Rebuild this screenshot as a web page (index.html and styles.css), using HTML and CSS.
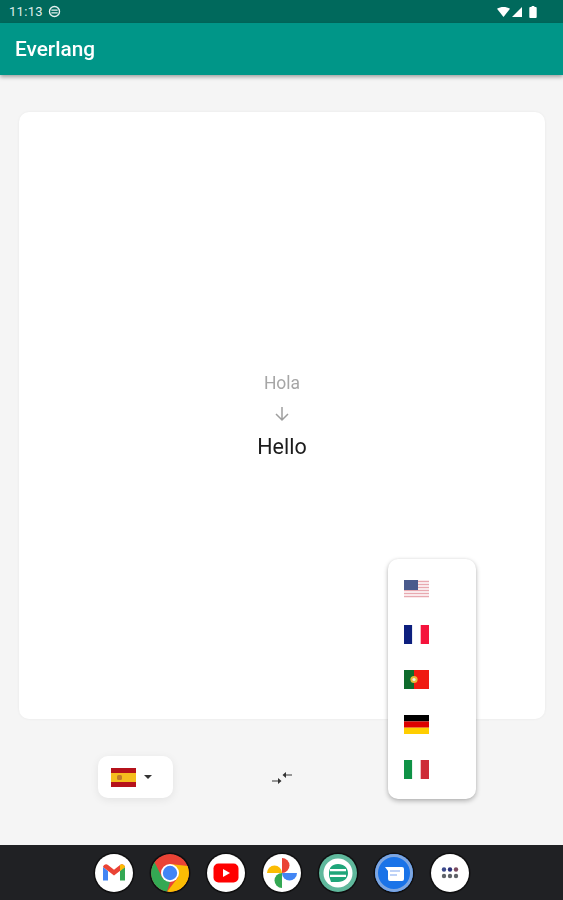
FILE: index.html
```html
<!DOCTYPE html>
<html lang="en">
<head>
<meta charset="utf-8">
<title>Everlang</title>
<link rel="stylesheet" href="styles.css">
</head>
<body>
<div class="screen">
  <header class="status">
    <div class="status-left">
      <span class="time">11:13</span>
      <svg class="dnd" viewBox="0 0 14 14"><circle cx="7" cy="7" r="5.4" fill="none" stroke="#e6f1ef" stroke-width="1.5"/><path d="M3.6 5.6h6.8M3.6 8.4h6.8" stroke="#e6f1ef" stroke-width="1.3"/></svg>
    </div>
    <div class="status-right">
      <svg class="s-wifi" viewBox="0 0 13 10"><path d="M0 1.800C3.800-.6 9.200-.6 13 1.800L6.500 10z" fill="#fff"/></svg>
      <svg class="s-signal" viewBox="0 0 10 10"><path d="M10 0v10H0z" fill="#fff"/></svg>
      <svg class="s-batt" viewBox="0 0 8 13"><path d="M2.500 0h3v1.200H7a1 1 0 0 1 1 1V12a1 1 0 0 1-1 1H1a1 1 0 0 1-1-1V2.200a1 1 0 0 1 1-1h1.500z" fill="#fff"/></svg>
    </div>
  </header>
  <div class="appbar"><h1 class="title">Everlang</h1></div>

  <main class="content">
    <section class="card">
      <div class="source">Hola</div>
      <svg class="arrow" viewBox="0 0 16 16"><path d="M8 1v13M2 8l6 6 6-6" fill="none" stroke="#9e9e9e" stroke-width="1.500"/></svg>
      <div class="target">Hello</div>
    </section>

    <div class="controls">
      <button class="lang-btn" type="button">
        <svg class="flag" viewBox="0 0 25 19"><rect width="25" height="19" fill="#b5121b"/><rect y="5" width="25" height="9" fill="#f5bd1e"/><rect x="6" y="7" width="5" height="5" rx="1.500" fill="#c07a2a"/></svg>
        <svg class="caret" viewBox="0 0 8 4"><path d="M0 0h8L4 4z" fill="#333"/></svg>
      </button>
      <svg class="swap" viewBox="0 0 20 14"><path d="M0 10h6.500M20 4h-6.500" stroke-width="1.400" stroke="#777" fill="none"/><path d="M6 7l3.500 3L6 13zM14 1l-3.500 3L14 7z" fill="#333"/></svg>
    </div>

    <ul class="menu">
      <li class="menu-item">
        <svg class="flag" viewBox="0 0 25 19"><rect width="25" height="19" fill="#fff"/><path d="M0 1.500h25M0 4.500h25M0 7.500h25M0 10.500h25M0 13.500h25M0 16.500h25" stroke="#e8a9b0" stroke-width="1.500"/><rect width="14" height="10" fill="#4a5a8c"/></svg>
      </li>
      <li class="menu-item">
        <svg class="flag" viewBox="0 0 25 19"><rect width="8.300" height="19" fill="#0d1f7e"/><rect x="8.300" width="8.400" height="19" fill="#fff"/><rect x="16.700" width="8.300" height="19" fill="#f5133c"/></svg>
      </li>
      <li class="menu-item">
        <svg class="flag" viewBox="0 0 25 19"><rect width="25" height="19" fill="#f01a10"/><rect width="10" height="19" fill="#0e6b2c"/><circle cx="10" cy="9.500" r="3.600" fill="#e8b93a"/><circle cx="10" cy="9.500" r="1.600" fill="#f4efe6"/></svg>
      </li>
      <li class="menu-item">
        <svg class="flag" viewBox="0 0 25 19"><rect width="25" height="6.400" fill="#000"/><rect y="6.400" width="25" height="6.300" fill="#dd0000"/><rect y="12.700" width="25" height="6.300" fill="#ffce00"/></svg>
      </li>
      <li class="menu-item">
        <svg class="flag" viewBox="0 0 25 19"><rect width="8.300" height="19" fill="#0f9246"/><rect x="8.300" width="8.400" height="19" fill="#fff"/><rect x="16.700" width="8.300" height="19" fill="#ce2b37"/></svg>
      </li>
    </ul>
  </main>

  <nav class="dock">
    <span class="app app-white">
      <svg viewBox="0 0 38 38"><path d="M8 13v13.500h5V17z" fill="#4285f4"/><path d="M25 17v9.500h5V13z" fill="#34a853"/><path d="M8 13c.8-3 3.500-3.200 5-2l6 4.700 6-4.700c1.500-1.200 4.200-1 5 2L19 21.500z" fill="#ea4335"/><path d="M25 11c1.500-1.200 4.200-1 5 2l-5 4z" fill="#fbbc04"/></svg>
    </span>
    <span class="app">
      <svg viewBox="0 0 38 38"><circle cx="19" cy="19" r="19" fill="#ea4335"/><path d="M3.400 8 11.200 23.500 19 28 16 37.800A19 19 0 0 1 3.400 8z" fill="#34a853"/><path d="M16 37.800 27 23.500 19 10 36.800 12A19 19 0 0 1 16 37.800z" fill="#fbbc04"/><circle cx="19" cy="19" r="9" fill="#fff"/><circle cx="19" cy="19" r="7.200" fill="#4285f4"/></svg>
    </span>
    <span class="app app-white">
      <svg viewBox="0 0 38 38"><rect x="6.500" y="9.500" width="25" height="19" rx="5" fill="#f00"/><path d="M16 15l7 4-7 4z" fill="#fff"/></svg>
    </span>
    <span class="app app-white">
      <svg viewBox="0 0 38 38"><path d="M19 19A7.500 7.500 0 0 0 4 19z" fill="#fbbc04"/><path d="M19 19A7.500 7.500 0 0 0 19 4z" fill="#ea4335"/><path d="M19 19A7.500 7.500 0 0 0 34 19z" fill="#4285f4"/><path d="M19 19A7.500 7.500 0 0 0 19 34z" fill="#34a853"/></svg>
    </span>
    <span class="app app-green">
      <svg viewBox="0 0 38 38"><circle cx="19" cy="19" r="14.500" fill="#fff"/><path d="M19 10c6 0 10 3.800 10 9s-4 9-10 9h-7l-1-3c-1-1.800-1-4.200-1-6 0-5.200 3-9 9-9z" fill="#1fa67a"/><path d="M11 16.200h16M11 21.800h16" stroke="#fff" stroke-width="2.200"/></svg>
    </span>
    <span class="app app-blue">
      <svg viewBox="0 0 38 38"><path d="M10 13h17a2 2 0 0 1 2 2v10a2 2 0 0 1-2 2H15a2 2 0 0 1-2-2v-8z" fill="#fff"/><path d="M15 17h10M15 21h7" stroke="#a9c4f5" stroke-width="1.600"/></svg>
    </span>
    <span class="app app-white">
      <svg viewBox="0 0 38 38"><circle cx="13" cy="15.500" r="2.200" fill="#3c4a8c"/><circle cx="19" cy="15.500" r="2.200" fill="#2a2f7a"/><circle cx="25" cy="15.500" r="2.200" fill="#7a4a60"/><circle cx="13" cy="22" r="2.200" fill="#5f6368"/><circle cx="19" cy="22" r="2.200" fill="#5f6368"/><circle cx="25" cy="22" r="2.200" fill="#5f6368"/></svg>
    </span>
  </nav>
</div>
</body>
</html>
```
FILE: styles.css
```css
* { box-sizing: border-box; }
html, body { margin: 0; padding: 0; }
body { font-family: Roboto, "Liberation Sans", sans-serif; background: #f5f5f5; }
.screen {
  width: 563px;
  height: 900px;
  display: flex;
  flex-direction: column;
  overflow: hidden;
  filter: blur(0.6px);
}
.status {
  height: 23px;
  background: #00695c;
  display: flex;
  align-items: center;
  justify-content: space-between;
  padding: 0 26px 0 9px;
  flex: none;
}
.status-left { display: flex; align-items: center; gap: 5px; }
.time { font-size: 13px; color: #dfeeeb; letter-spacing: 0.3px; line-height: 1; }
.dnd { width: 13px; height: 13px; }
.status-right { display: flex; align-items: center; gap: 2px; }
.s-wifi { width: 13px; height: 10px; }
.s-signal { width: 10px; height: 10px; }
.s-batt { width: 8px; height: 12px; margin-left: 5px; }
.appbar {
  height: 52px;
  background: #009688;
  flex: none;
  display: flex;
  align-items: center;
  padding-left: 15px;
  box-shadow: 0 2px 4px rgba(0,0,0,.35);
  position: relative;
  z-index: 2;
}
.title { margin: 0; font-size: 20.800px; font-weight: 500; color: #fff; }
.content {
  flex: 1;
  position: relative;
  display: flex;
  flex-direction: column;
  padding: 37px 18px 0 19px;
}
.card {
  height: 607px;
  background: #fff;
  border-radius: 10px;
  box-shadow: 0 0 3px rgba(0,0,0,.06);
  display: flex;
  flex-direction: column;
  align-items: center;
  padding-top: 260px;
}
.source { font-size: 17.500px; line-height: 22px; color: #a6a6a6; }
.arrow { width: 16px; height: 16px; margin-top: 12px; }
.target { font-size: 21.500px; line-height: 28px; margin-top: 11px; color: #1c1c1c; }
.controls {
  display: flex;
  align-items: center;
  gap: 99px;
  padding: 37px 0 0 79px;
}
.lang-btn {
  width: 75px;
  height: 42px;
  border: 0;
  background: #fff;
  border-radius: 10px;
  box-shadow: 0 2px 8px rgba(0,0,0,.08);
  display: flex;
  align-items: center;
  padding: 0 0 0 13px;
  gap: 8px;
}
.swap { width: 20px; height: 14px; margin-top: 2px; }
.menu {
  position: absolute;
  left: 388px;
  top: 484px;
  width: 88px;
  height: 240px;
  margin: 0;
  padding: 8px 0;
  list-style: none;
  background: #fff;
  border-radius: 10px;
  box-shadow: 0 2px 5px rgba(0,0,0,.28), 0 0 3px rgba(0,0,0,.06);
  display: flex;
  flex-direction: column;
}
.menu-item { height: 45px; flex: none; display: flex; align-items: center; padding-left: 16px; }
.flag { width: 25px; height: 19px; display: block; flex: none; }
.caret { width: 8px; height: 4px; }
.dock {
  height: 55px;
  flex: none;
  background: #202124;
  display: flex;
  align-items: center;
  justify-content: center;
  gap: 18px;
}
.app {
  width: 38px;
  height: 38px;
  border-radius: 50%;
  overflow: hidden;
  display: block;
  flex: none;
  box-shadow: 0 0 0 1.500px #0f0f10;
}
.app svg { width: 38px; height: 38px; display: block; }
.app-white { background: #fff; }
.app-green { background: #5fb89c; }
.app-blue { background: #1a73e8; box-shadow: 0 0 0 1.500px #0f0f10, inset 0 0 0 3px #7ea6e0; }
```
